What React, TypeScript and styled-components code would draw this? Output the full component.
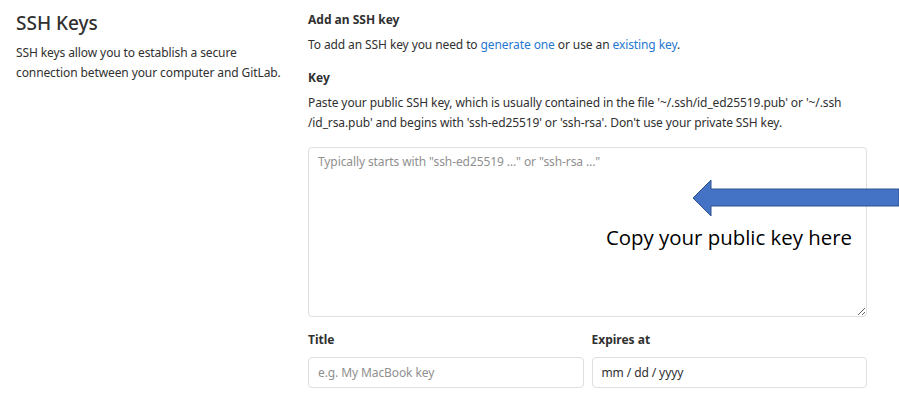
import styled, { createGlobalStyle } from 'styled-components';

const GlobalStyle = createGlobalStyle`
  html, body {
    margin: 0;
    padding: 0;
    background: #ffffff;
  }
  body {
    font-family: 'Noto Sans', 'DejaVu Sans', sans-serif;
    color: #303030;
  }
`;

const App: React.FC = () => {
  return (
    <>
      <GlobalStyle />
      <Page>
        <Sidebar>
          <PageTitle>SSH Keys</PageTitle>
          <Description>
            SSH keys allow you to establish a secure connection between your
            computer and GitLab.
          </Description>
        </Sidebar>
        <Main>
          <SectionTitle>Add an SSH key</SectionTitle>
          <Paragraph>
            To add an SSH key you need to <Link href='#'>generate one</Link> or
            use an <Link href='#'>existing key</Link>.
          </Paragraph>
          <FieldLabel>Key</FieldLabel>
          <Paragraph>
            <Nowrap>
              Paste your public SSH key, which is usually contained in the file
              '~/.ssh/id_ed25519.pub' or '~/.ssh
            </Nowrap>
            <br />
            /id_rsa.pub' and begins with 'ssh-ed25519' or 'ssh-rsa'. Don't use
            your private SSH key.
          </Paragraph>
          <KeyFrame>
            <KeyArea placeholder='Typically starts with "ssh-ed25519 …" or "ssh-rsa …"' />
            <Callout>
              <Arrow width='207' height='38' viewBox='0 0 207 38'>
                <polygon
                  points='1,19 19,1 19,10 207,10 207,27 19,27 19,37'
                  fill='#4472c4'
                  stroke='#2f528f'
                  strokeWidth='1'
                />
              </Arrow>
              <CalloutText>Copy your public key here</CalloutText>
            </Callout>
          </KeyFrame>
          <FieldRow>
            <Field>
              <FieldLabel>Title</FieldLabel>
              <TextInput placeholder='e.g. My MacBook key' />
            </Field>
            <Field>
              <FieldLabel>Expires at</FieldLabel>
              <TextInput defaultValue='mm / dd / yyyy' readOnly />
            </Field>
          </FieldRow>
        </Main>
      </Page>
    </>
  );
};

export default App;

const Page = styled.div`
  width: 899px;
  height: 393px;
  overflow: hidden;
  display: grid;
  grid-template-columns: 292px 559px;
  padding-left: 16px;
  box-sizing: border-box;
`;

const Sidebar = styled.div`
  display: flex;
  flex-direction: column;
  padding-top: 9px;
`;

const PageTitle = styled.h4`
  margin: 0;
  font-size: 19px;
  font-weight: 500;
  line-height: 28px;
  color: #303030;
`;

const Description = styled.p`
  margin: 6px 0 0;
  font-size: 12px;
  letter-spacing: -0.1px;
  line-height: 20px;
  color: #303030;
  width: 268px;
`;

const Main = styled.div`
  display: flex;
  flex-direction: column;
  padding-top: 10px;
`;

const SectionTitle = styled.div`
  font-size: 12px;
  font-weight: 700;
  line-height: 20px;
  color: #303030;
`;

const Paragraph = styled.p`
  margin: 5px 0 0;
  font-size: 12px;
  letter-spacing: -0.1px;
  line-height: 20px;
  color: #303030;
`;

const Nowrap = styled.span`
  white-space: nowrap;
`;

const Link = styled.a`
  color: #1f78d1;
  text-decoration: none;
`;

const FieldLabel = styled.div`
  margin-top: 13px;
  font-size: 12px;
  font-weight: 700;
  line-height: 20px;
  color: #303030;
`;

const KeyFrame = styled.div`
  position: relative;
  margin-top: 14px;
  height: 170px;
`;

const KeyArea = styled.textarea`
  display: block;
  width: 100%;
  height: 100%;
  box-sizing: border-box;
  border: 1px solid #dfdfdf;
  border-radius: 4px;
  padding: 5px 9px;
  font-family: 'Noto Sans', 'DejaVu Sans', sans-serif;
  font-size: 12px;
  letter-spacing: -0.1px;
  line-height: 18px;
  color: #303030;
  resize: vertical;
  outline: none;

  &::placeholder {
    color: #8f8f8f;
  }
`;

const Callout = styled.div`
  position: absolute;
  left: 298px;
  top: 32px;
  display: flex;
  flex-direction: column;
  align-items: flex-start;
  pointer-events: none;
`;

const Arrow = styled.svg`
  margin-left: 86px;
  display: block;
`;

const CalloutText = styled.div`
  margin-top: 7px;
  font-family: 'Open Sans', 'Liberation Sans', sans-serif;
  font-size: 20.4px;
  line-height: 26px;
  color: #000000;
  white-space: nowrap;
`;

const FieldRow = styled.div`
  display: grid;
  grid-template-columns: 1fr 1fr;
  column-gap: 8px;
`;

const Field = styled.div`
  display: flex;
  flex-direction: column;
`;

const TextInput = styled.input`
  margin-top: 7px;
  height: 31px;
  box-sizing: border-box;
  border: 1px solid #dfdfdf;
  border-radius: 4px;
  padding: 0 9px;
  font-family: 'Noto Sans', 'DejaVu Sans', sans-serif;
  font-size: 12px;
  letter-spacing: -0.1px;
  color: #303030;
  outline: none;

  &::placeholder {
    color: #8f8f8f;
  }
`;
